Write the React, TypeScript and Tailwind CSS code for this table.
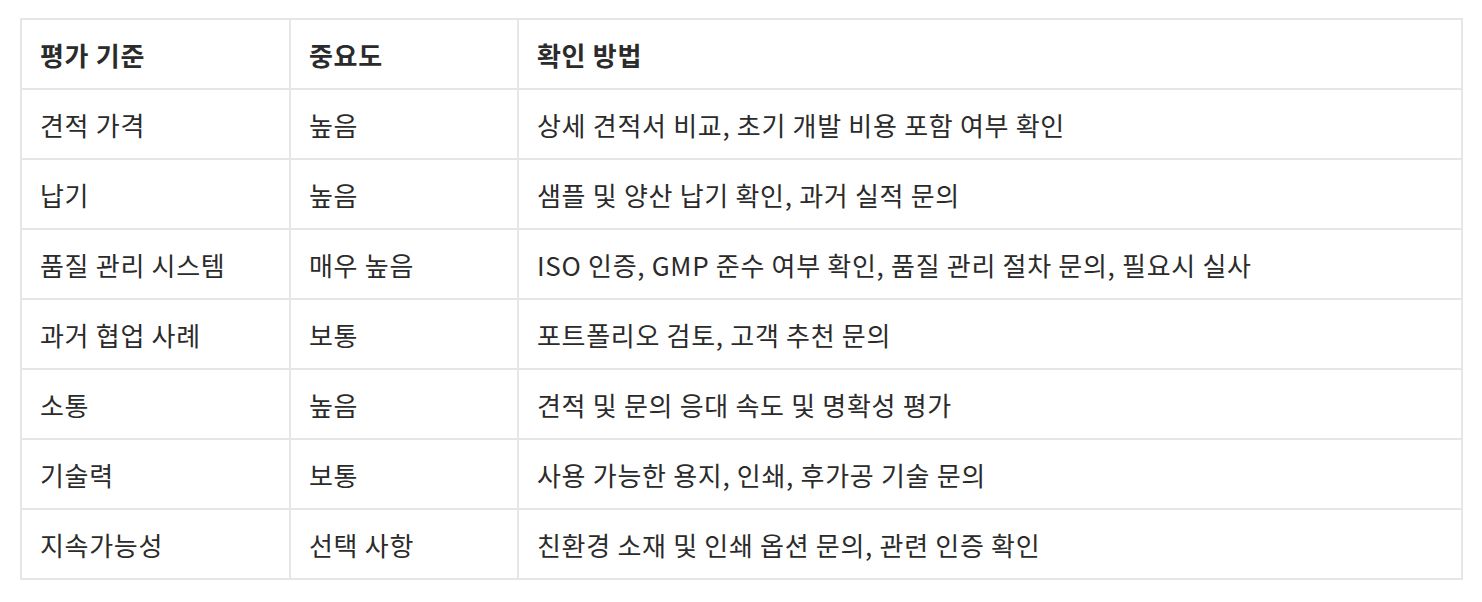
const rows: [string, string, string][] = [
  ["견적 가격", "높음", "상세 견적서 비교, 초기 개발 비용 포함 여부 확인"],
  ["납기", "높음", "샘플 및 양산 납기 확인, 과거 실적 문의"],
  ["품질 관리 시스템", "매우 높음", "ISO 인증, GMP 준수 여부 확인, 품질 관리 절차 문의, 필요시 실사"],
  ["과거 협업 사례", "보통", "포트폴리오 검토, 고객 추천 문의"],
  ["소통", "높음", "견적 및 문의 응대 속도 및 명확성 평가"],
  ["기술력", "보통", "사용 가능한 용지, 인쇄, 후가공 기술 문의"],
  ["지속가능성", "선택 사항", "친환경 소재 및 인쇄 옵션 문의, 관련 인증 확인"],
];

const cell = "border-2 border-[#e6e6e6] px-[18px] text-left align-middle";

export default function App() {
  return (
    <div className="min-h-screen bg-white pt-[18px] pl-[20px] font-['Noto_Sans_CJK_KR',sans-serif] text-[26px] tracking-[0.7px] text-[#2b2b2b]">
      <table className="w-[1443px] table-fixed border-collapse">
        <colgroup>
          <col className="w-[269px]" />
          <col className="w-[228px]" />
          <col />
        </colgroup>
        <thead>
          <tr className="h-[70px]">
            <th className={`${cell} font-bold`}>평가 기준</th>
            <th className={`${cell} font-bold`}>중요도</th>
            <th className={`${cell} font-bold`}>확인 방법</th>
          </tr>
        </thead>
        <tbody>
          {rows.map(([a, b, c]) => (
            <tr key={a} className="h-[70px]">
              <td className={cell}>{a}</td>
              <td className={cell}>{b}</td>
              <td className={cell}>{c}</td>
            </tr>
          ))}
        </tbody>
      </table>
    </div>
  );
}
